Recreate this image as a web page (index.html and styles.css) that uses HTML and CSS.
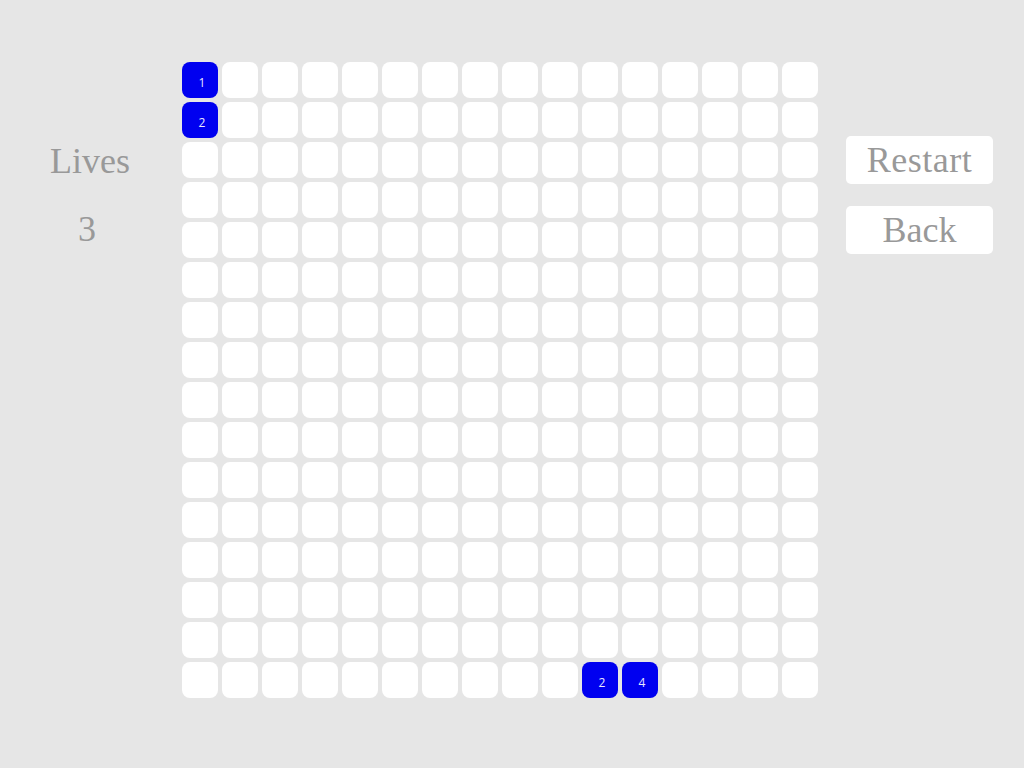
FILE: index.html
```html
<!DOCTYPE html>
<html>
<head>
<meta charset="utf-8">
<link rel="stylesheet" href="styles.css">
</head>
<body>
<div class="page">
  <div class="side">
    <div class="label">Lives</div>
    <div class="value">3</div>
  </div>
  <div class="board" id="board"></div>
  <div class="actions">
    <div class="btn">Restart</div>
    <div class="btn">Back</div>
  </div>
</div>
<script>
  var board = document.getElementById('board');
  var marks = {"0,0": "1", "1,0": "2", "15,10": "2", "15,11": "4"};
  for (var r = 0; r < 16; r++) {
    for (var c = 0; c < 16; c++) {
      var d = document.createElement('div');
      var k = r + ',' + c;
      d.className = marks[k] ? 'cell on' : 'cell';
      if (marks[k]) d.textContent = marks[k];
      board.appendChild(d);
    }
  }
</script>
</body>
</html>
```
FILE: styles.css
```css
html, body {
  margin: 0;
  padding: 0;
  background: #e6e6e6;
}
.page {
  display: flex;
  padding-top: 62px;
  font-family: "Liberation Serif", serif;
  color: #999;
}
.side {
  width: 182px;
  padding-top: 81px;
  text-align: center;
  font-size: 36px;
  line-height: 36px;
}
.label {
  padding-right: 2px;
}
.value {
  margin-top: 32px;
  padding-right: 8px;
}
.board {
  display: grid;
  grid-template-columns: repeat(16, 36px);
  grid-auto-rows: 36px;
  gap: 4px;
}
.cell {
  background: #fff;
  border-radius: 8px;
}
.cell.on {
  background: #0000f0;
  color: #e8e8ff;
  font-family: "Open Sans", sans-serif;
  font-size: 12px;
  display: flex;
  align-items: center;
  justify-content: center;
  padding: 4px 0 0 4px;
  box-sizing: border-box;
}
.actions {
  margin-left: 28px;
  padding-top: 74px;
  display: flex;
  flex-direction: column;
  gap: 22px;
}
.btn {
  width: 147px;
  height: 48px;
  line-height: 48px;
  background: #fff;
  border-radius: 5px;
  text-align: center;
  font-size: 36px;
}
.btn:first-child {
  letter-spacing: 0.5px;
}
```
